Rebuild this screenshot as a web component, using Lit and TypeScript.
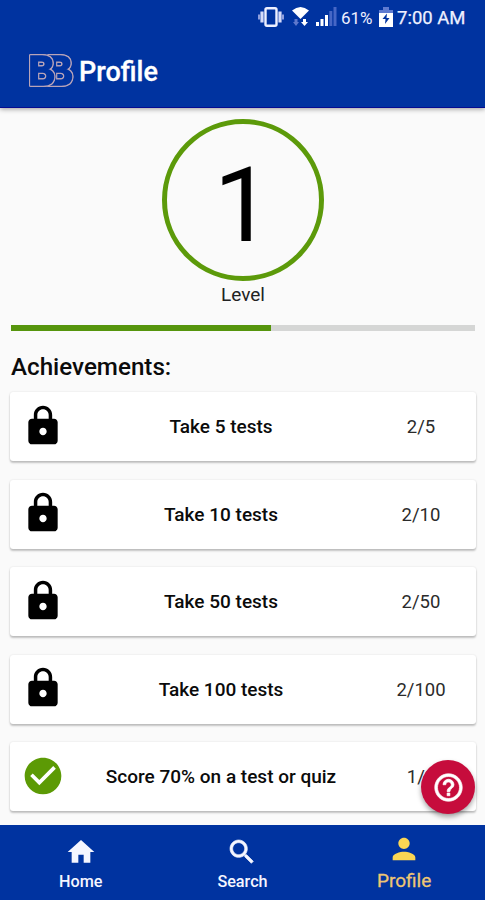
import { LitElement, html, svg, css } from "lit";
import { customElement, property } from "lit/decorators.js";

const paths = {
  lock: "M18 8h-1V6c0-2.76-2.24-5-5-5S7 3.24 7 6v2H6c-1.100 0-2 .9-2 2v10c0 1.100.9 2 2 2h12c1.100 0 2-.9 2-2V10c0-1.100-.9-2-2-2zm-6 9c-1.100 0-2-.9-2-2s.9-2 2-2 2 .9 2 2-.9 2-2 2zm3.100-9H8.900V6c0-1.710 1.390-3.100 3.100-3.100s3.100 1.390 3.100 3.100v2z",
  check: "M12 2C6.480 2 2 6.480 2 12s4.480 10 10 10 10-4.480 10-10S17.520 2 12 2zm-2 15l-5-5 1.410-1.410L10 14.170l7.590-7.590L19 8l-9 9z",
  home: "M10 20v-6h4v6h5v-8h3L12 3 2 12h3v8z",
  search: "M15.500 14h-.79l-.28-.27C15.410 12.590 16 11.110 16 9.500 16 5.910 13.090 3 9.500 3S3 5.910 3 9.500 5.910 16 9.500 16c1.610 0 3.090-.59 4.230-1.570l.27.28v.79l5 4.990L20.490 19l-4.990-5zm-6 0C7.010 14 5 11.990 5 9.500S7.010 5 9.500 5 14 7.010 14 9.500 11.990 14 9.500 14z",
  person: "M12 12c2.210 0 4-1.790 4-4s-1.790-4-4-4-4 1.790-4 4 1.790 4 4 4zm0 2c-2.670 0-8 1.340-8 4v2h16v-2c0-2.660-5.330-4-8-4z",
  help: "M11 18h2v-2h-2v2zm1-16C6.480 2 2 6.480 2 12s4.480 10 10 10 10-4.480 10-10S17.520 2 12 2zm0 18c-4.410 0-8-3.590-8-8s3.590-8 8-8 8 3.590 8 8-3.590 8-8 8zm0-14c-2.210 0-4 1.790-4 4h2c0-1.100.9-2 2-2s2 .9 2 2c0 2-3 1.750-3 5h2c0-2.250 3-2.500 3-5 0-2.210-1.790-4-4-4z",
};
type IconName = keyof typeof paths;

@customElement("app-icon")
class AppIcon extends LitElement {
  static styles = css`
    :host { display: block; flex: none; }
    svg { display: block; width: 100%; height: 100%; fill: currentColor; }
    .strong { stroke: currentColor; stroke-width: 0.5; }
  `;
  @property() name: IconName = "home";
  render() {
    const strong = this.name === "help" || this.name === "search" ? "strong" : "";
    return html`<svg viewBox="0 0 24 24" class=${strong}>${svg`<path d=${paths[this.name]}></path>`}</svg>`;
  }
}

@customElement("status-bar")
class StatusBar extends LitElement {
  static styles = css`
    :host { display: flex; align-items: center; justify-content: flex-end; height: 35px; padding-right: 20px; color: #eef0ff; }
    svg { display: block; flex: none; position: relative; top: -1px; }
    .vibrate { margin-right: 8px; }
    .wifi { margin-right: 7px; }
    .signal { margin-right: 4px; }
    .percent { width: 33px; font-size: 17px; line-height: 20px; white-space: nowrap; margin-right: 5px; letter-spacing: 0; }
    .battery { margin-right: 4px; }
    .time { width: 68px; font-size: 18.500px; line-height: 20px; white-space: nowrap; -webkit-text-stroke: 0.250px currentColor; }
  `;
  render() {
    return html`
      <svg class="vibrate" width="26" height="20" viewBox="0 0 26 20">
        <rect x="7.500" y="1.200" width="11" height="17.600" rx="1.500" fill="none" stroke="#eef0ff" stroke-width="2.400"></rect>
        <path d="M4 4.500v11M22 4.500v11" stroke="#d5dbfa" stroke-width="3.200"></path>
        <path d="M1 7.500v5M25 7.500v5" stroke="#8f9fdd" stroke-width="2"></path>
      </svg>
      <svg class="wifi" width="17" height="20" viewBox="0 0 17 20">
        <path d="M0 3.500Q8.500-3.500 17 3.500L8.500 12z" fill="#fff"></path>
        <path d="M2.500 12h3v3H7l-3 4-3-4h1.500z" fill="#5e78cc"></path>
        <path d="M11 12h3v3h2l-3.500 4L9 15h2z" fill="#fff"></path>
      </svg>
      <svg class="signal" width="21" height="20" viewBox="0 0 21 20">
        <path d="M0 15h3v4H0zM4.500 12h3v7h-3zM9 8h3v11H9z" fill="#fff"></path>
        <path d="M13.300 4h3v15h-3zM17.500 0h3v19h-3z" fill="#4667c6"></path>
      </svg>
      <span class="percent">61%</span>
      <svg class="battery" width="14" height="20" viewBox="0 0 14 20">
        <path d="M4 0h6v3h4v4H0V3h4z" fill="#5f7bd0"></path>
        <path d="M0 6h14v14H0z" fill="#fff"></path>
        <path d="M8 6.500L3.500 12H6.500L6 17l4.500-6H7.500z" fill="#0033a0"></path>
      </svg>
      <span class="time">7:00 AM</span>
    `;
  }
}

@customElement("brand-logo")
class BrandLogo extends LitElement {
  static styles = css`
    :host { display: block; width: 54px; height: 58px; }
    svg { display: block; }
    text {
      font: bold 44px "Liberation Mono", monospace; fill: #0033a0; stroke: #0033a0; stroke-width: 1.600px;
      filter: drop-shadow(1px 0 0 #b9a4b8) drop-shadow(0 1px 0 #b9a4b8) drop-shadow(-1px 0 0 #b9a4b8) drop-shadow(0 -1px 0 #b9a4b8);
    }
  `;
  render() {
    return html`<svg width="54" height="58" viewBox="0 0 54 58">
      <text x="18" y="43">B</text>
      <text x="0" y="43">B</text>
    </svg>`;
  }
}

@customElement("achievement-card")
class AchievementCard extends LitElement {
  static styles = css`
    :host {
      display: grid; grid-template-columns: 66px 290px 110px; align-items: center; height: 69px;
      background: #fff; border-radius: 3px; color: #0b0b0b; font-size: 18.500px; line-height: 22px;
      box-shadow: 0 2px 2px rgba(0,0,0,.22), 0 0 2px rgba(0,0,0,.12);
    }
    app-icon { width: 44px; height: 44px; justify-self: center; color: #000; position: relative; top: -1px; }
    .done { color: #5c9a05; }
    .title { text-align: center; font-size: 19px; font-weight: 500; white-space: nowrap; padding-top: 1px; }
    .count { text-align: center; color: #2b2b2b; padding-top: 1px; }
  `;
  @property() label = "";
  @property() count = "";
  @property({ type: Boolean }) done = false;
  render() {
    return html`
      <app-icon class=${this.done ? "done" : "locked"} name=${this.done ? "check" : "lock"}></app-icon>
      <span class="title">${this.label}</span>
      <span class="count">${this.count}</span>
    `;
  }
}

@customElement("app-root")
class AppRoot extends LitElement {
  static styles = css`
    * { box-sizing: border-box; }
    :host {
      display: flex; flex-direction: column; position: relative; width: 485px; height: 900px; overflow: hidden;
      background: #fafafa; color: #0b0b0b; font-family: Roboto, "Liberation Sans", sans-serif;
    }
    header { flex: none; height: 108px; background: #0033a0; border-bottom: 1px solid #060b91; box-shadow: 0 1px 5px rgba(0,0,0,.4); }
    .bar { display: flex; align-items: center; height: 72px; padding-left: 28px; }
    h1 { margin: 2px 0 0 -3px; color: #fff; font-size: 27px; line-height: 32px; font-weight: 500; -webkit-text-stroke: 0.300px #fff; }
    main { flex: 1; min-height: 0; overflow: hidden; padding: 11px 9px 0 10px; }
    .ring {
      display: flex; justify-content: center; align-items: center; width: 162px; height: 162px; margin: 0 auto;
      border: 5px solid #5c9a0a; border-radius: 50%; color: #000; font-size: 104px; line-height: 120px; padding-top: 11px;
    }
    .level { margin-top: 3px; text-align: center; font-size: 19px; line-height: 22px; color: #222; }
    .track { height: 6px; margin: 19px 1px 0; background: #d5d6d5; }
    .fill { height: 6px; background: #56950d; }
    h2 { margin: 21px 0 0 1px; font-size: 24.200px; line-height: 30px; font-weight: 500; }
    .list { display: grid; row-gap: 18.600px; margin-top: 10px; }
    nav { flex: none; display: grid; grid-template-columns: repeat(3, 1fr); height: 75px; background: #0033a0; color: #f5f6ff; }
    .tab { display: flex; flex-direction: column; align-items: center; padding-top: 11px; font-size: 16.200px; line-height: 20px; font-weight: 500; }
    .tab app-icon { width: 32px; height: 32px; margin-bottom: 4px; }
    .tab.active { color: #eec673; font-size: 19px; font-weight: 400; padding-top: 7px; -webkit-text-stroke: 0.300px currentColor; }
    .tab.active app-icon { color: #fbd654; width: 34px; height: 34px; margin-bottom: 5px; }
    .fab {
      position: absolute; right: 10px; bottom: 86px; width: 54px; height: 54px; border-radius: 50%;
      display: grid; place-items: center; background: #c60c3c; color: #fff; box-shadow: 0 3px 5px rgba(0,0,0,.35);
    }
    .fab app-icon { width: 33px; height: 33px; }
  `;
  private progress = 56;
  private achievements = [
    { label: "Take 5 tests", count: "2/5", done: false },
    { label: "Take 10 tests", count: "2/10", done: false },
    { label: "Take 50 tests", count: "2/50", done: false },
    { label: "Take 100 tests", count: "2/100", done: false },
    { label: "Score 70% on a test or quiz", count: "1/1", done: true },
  ];
  render() {
    return html`
      <header>
        <status-bar></status-bar>
        <div class="bar"><brand-logo></brand-logo><h1>Profile</h1></div>
      </header>
      <main>
        <div class="ring">1</div>
        <div class="level">Level</div>
        <div class="track"><div class="fill" style="width:${this.progress}%"></div></div>
        <h2>Achievements:</h2>
        <div class="list">
          ${this.achievements.map((a) => html`<achievement-card .label=${a.label} .count=${a.count} .done=${a.done}></achievement-card>`)}
        </div>
      </main>
      <nav>
        <div class="tab"><app-icon name="home"></app-icon>Home</div>
        <div class="tab"><app-icon name="search"></app-icon>Search</div>
        <div class="tab active"><app-icon name="person"></app-icon>Profile</div>
      </nav>
      <div class="fab"><app-icon name="help"></app-icon></div>
    `;
  }
}
